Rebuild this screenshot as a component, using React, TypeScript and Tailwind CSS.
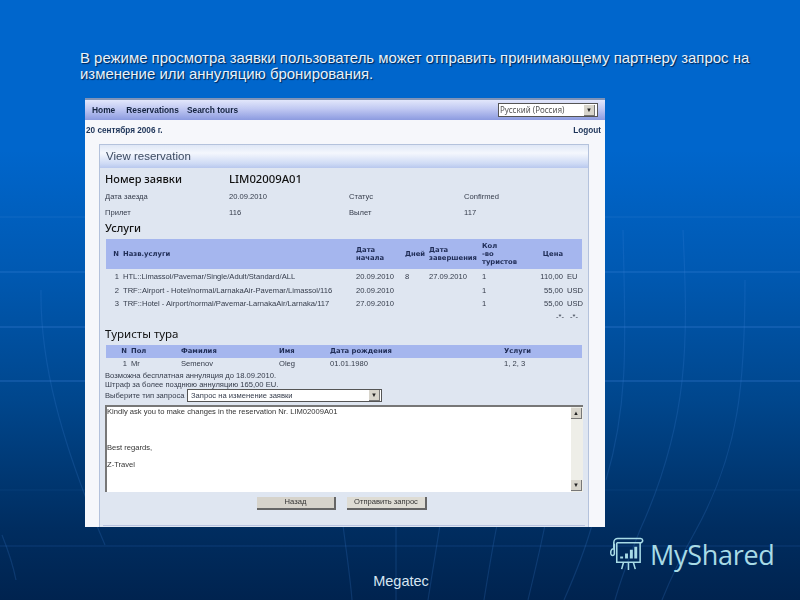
const services = [
  { n: '1', name: 'HTL::Limassol/Pavemar/Single/Adult/Standard/ALL', start: '20.09.2010', days: '8', end: '27.09.2010', count: '1', price: '110,00', cur: 'EU' },
  { n: '2', name: 'TRF::Airport - Hotel/normal/LarnakaAir-Pavemar/Limassol/116', start: '20.09.2010', days: '', end: '', count: '1', price: '55,00', cur: 'USD' },
  { n: '3', name: 'TRF::Hotel - Airport/normal/Pavemar-LarnakaAir/Larnaka/117', start: '27.09.2010', days: '', end: '', count: '1', price: '55,00', cur: 'USD' },
];

function Backdrop() {
  return (
    <svg className="absolute inset-0 w-full h-full" viewBox="0 0 800 600" fill="none">
      <g stroke="#3f86dc" strokeWidth="1">
        <path d="M0 217H800" strokeOpacity="0.25" />
        <path d="M0 272H800" strokeOpacity="0.45" />
        <path d="M0 327H800" strokeOpacity="0.5" />
        <path d="M0 381H800" strokeOpacity="0.5" />
        <path d="M0 490H800" strokeOpacity="0.1" />
        <path d="M0 546H800" strokeOpacity="0.2" />
      </g>
      <g stroke="#3f86dc" strokeWidth="1.2" strokeOpacity="0.2">
        <path d="M41 290C40 360 60 440 105 545" />
        <path d="M2 535C6 545 12 560 16 580" />
        <path d="M343 525C346 550 350 575 352 600" />
        <path d="M396 525V600" />
        <path d="M440 525C436 550 432 575 428 600" />
        <path d="M497 525C492 550 488 575 484 600" />
        <path d="M545 525C540 550 534 575 528 600" />
        <path d="M592 525C585 550 575 575 564 600" />
        <path d="M623 230C625 330 630 400 606 480" />
        <path d="M683 230C688 340 690 420 640 530" />
        <path d="M745 280C745 380 740 450 696 530" />
        <path d="M640 530C630 555 622 575 615 600" />
        <path d="M696 530C682 555 672 575 662 600" />
      </g>
    </svg>
  );
}

function ArrowBox({ dir = 'down' }: { dir?: 'down' | 'up' }) {
  return (
    <span className="w-[11px] h-[11px] flex items-center justify-center bg-[#d8d5cc] border-r border-b border-[#777] text-[#222] text-[6px] leading-none">
      {dir === 'down' ? '▼' : '▲'}
    </span>
  );
}

function LogoIcon() {
  return (
    <svg width="37" height="37" viewBox="0 0 38 38" fill="none" stroke="#a8dbe6" strokeWidth="1.6">
      <path d="M6 13V6.5C6 4 8 2.5 10 2.5H33.5C36 2.5 36.5 6 34 7H9" />
      <path d="M6 13C3 13 2.5 16 3 18.5C3.5 20.5 6 20.5 6.5 18.5V8" />
      <path d="M9 7V27H33V7" />
      <path d="M14 34L16 27M21 35V27M28 34L26 27" />
      <path d="M14 23V21M19 23V18M24 23V14M28.5 23V11" strokeWidth="3" />
    </svg>
  );
}

export default function App() {
  return (
    <div className="relative w-[800px] h-[600px] overflow-hidden bg-[linear-gradient(180deg,#0066cc_0%,#0066cc_25%,#0059b2_45%,#00468c_67%,#002d60_88%,#00234f_100%)] font-['Liberation_Sans',sans-serif]">
      <Backdrop />
      <div className="relative flex flex-col h-full">
        <p className="ml-[80px] mt-[50px] w-[690px] text-[14.95px] leading-[15.5px] text-[#e8f2fb] [text-shadow:1px_1px_1px_#00234f] h-[48px]">
          В режиме просмотра заявки пользователь может отправить принимающему партнеру запрос на изменение или аннуляцию бронирования.
        </p>

        <div className="ml-[85px] w-[520px] h-[429px] bg-[#f6f7fb] border-t-2 border-[#7f93b8] blur-[0.35px] text-[7.6px] text-[#343b4a] flex flex-col overflow-hidden">
          <div className="h-[20px] shrink-0 px-[7px] flex items-center justify-between bg-[linear-gradient(180deg,#e2e7fb_0%,#c0c8f2_45%,#8c9be0_100%)]">
            <div className="flex text-[8.4px] font-bold text-[#14233f]">
              <span>Home</span>
              <span className="ml-[11px]">Reservations</span>
              <span className="ml-[8px]">Search tours</span>
            </div>
            <div className="w-[100px] h-[14px] bg-white border border-[#555] pl-[1px] pr-[2px] flex items-center justify-between text-[8px] text-[#555] font-['Noto_Sans',sans-serif]">
              <span>Русский (Россия)</span>
              <ArrowBox />
            </div>
          </div>

          <div className="h-[24px] shrink-0 pl-[1px] pr-[4px] pt-[5px] flex justify-between text-[8.2px] font-bold text-[#1c3358]">
            <span>20 сентября 2006 г.</span>
            <span>Logout</span>
          </div>

          <div className="ml-[14px] mr-[16px] flex-1 bg-[#dfe6f1] border-x border-t border-[#b4c2dc] flex flex-col">
            <div className="h-[23px] shrink-0 pl-[6px] flex items-center text-[11.5px] text-[#3c4a60] bg-[linear-gradient(180deg,#dfe7f6_0%,#f4f7fd_35%,#cfdbf5_80%,#b8c8ee_100%)]">
              View reservation
            </div>

            <div className="pl-[5px] pr-[5px] flex flex-col">
              <div className="flex items-center h-[20px] mt-[1px] text-[#111] text-[11px] font-medium font-['Noto_Sans',sans-serif]">
                <span className="w-[124px]">Номер заявки</span>
                <span className="text-[11.3px]">LIM02009A01</span>
              </div>
              <div className="grid grid-cols-[124px_120px_115px_1fr] h-[16px] items-center">
                <span>Дата заезда</span>
                <span>20.09.2010</span>
                <span>Статус</span>
                <span>Confirmed</span>
              </div>
              <div className="grid grid-cols-[124px_120px_115px_1fr] h-[15px] items-center">
                <span>Прилет</span>
                <span>116</span>
                <span>Вылет</span>
                <span>117</span>
              </div>
              <div className="h-[17px] flex items-center text-[11px] font-medium text-[#111] font-['Noto_Sans',sans-serif]">Услуги</div>

              <div className="ml-[1px] mr-[1px] mt-[2px]">
                <div className="grid grid-cols-[15px_233px_49px_24px_53px_41px_44px_18px] gap-x-0 h-[30px] items-center bg-[#a5b6ee] text-[#1f2c55] font-bold font-['DejaVu_Sans',sans-serif] text-[6.8px] leading-[8px]">
                  <span className="text-right pr-[2px]">N</span>
                  <span className="pl-[2px]">Назв.услуги</span>
                  <span className="pl-[2px]">Дата<br />начала</span>
                  <span className="pl-[2px]">Дней</span>
                  <span className="pl-[2px]">Дата<br />завершения</span>
                  <span className="pl-[2px]">Кол<br />-во<br />туристов</span>
                  <span className="text-right pr-[2px]">Цена</span>
                  <span />
                </div>
                <div className="h-[1px]" />
                {services.map((s) => (
                  <div key={s.n} className="grid grid-cols-[15px_233px_49px_24px_53px_41px_44px_18px] h-[13px] items-center mt-[0.5px]">
                    <span className="text-right pr-[2px]">{s.n}</span>
                    <span className="pl-[2px] whitespace-nowrap">{s.name}</span>
                    <span className="pl-[2px]">{s.start}</span>
                    <span className="pl-[2px]">{s.days}</span>
                    <span className="pl-[2px]">{s.end}</span>
                    <span className="pl-[2px]">{s.count}</span>
                    <span className="text-right pr-[2px]">{s.price}</span>
                    <span className="pl-[2px]">{s.cur}</span>
                  </div>
                ))}
                <div className="flex justify-end h-[13px] items-center gap-[6px] pr-[4px]">
                  <span>-*-</span>
                  <span>-*-</span>
                </div>
              </div>

              <div className="h-[20px] flex items-center text-[11.5px] text-[#111] font-['Noto_Sans',sans-serif]">Туристы тура</div>

              <div className="ml-[1px] mr-[1px] mt-[1px]">
                <div className="grid grid-cols-[23px_51px_98px_51px_174px_1fr] h-[13px] items-center bg-[#a5b6ee] text-[#1f2c55] font-bold font-['DejaVu_Sans',sans-serif] text-[6.8px]">
                  <span className="text-right pr-[2px]">N</span>
                  <span className="pl-[2px]">Пол</span>
                  <span className="pl-[1px]">Фамилия</span>
                  <span className="pl-[1px]">Имя</span>
                  <span className="pl-[1px]">Дата рождения</span>
                  <span className="pl-[1px]">Услуги</span>
                </div>
                <div className="grid grid-cols-[23px_51px_98px_51px_174px_1fr] h-[13px] items-center">
                  <span className="text-right pr-[2px]">1</span>
                  <span className="pl-[2px]">Mr</span>
                  <span className="pl-[1px]">Semenov</span>
                  <span className="pl-[1px]">Oleg</span>
                  <span className="pl-[1px]">01.01.1980</span>
                  <span className="pl-[1px]">1, 2, 3</span>
                </div>
              </div>

              <div className="leading-[9px]">
                <div>Возможна бесплатная аннуляция до 18.09.2010.</div>
                <div>Штраф за более позднюю аннуляцию 165,00 EU.</div>
              </div>

              <div className="flex items-center h-[14px]">
                <span className="w-[82px]">Выберите тип запроса</span>
                <div className="w-[195px] h-[13px] bg-white border border-[#555] pl-[3px] pr-[1px] flex items-center justify-between">
                  <span>Запрос на изменение заявки</span>
                  <ArrowBox />
                </div>
              </div>

              <div className="mt-[2px] h-[87px] bg-white border-l-2 border-t-2 border-[#777] flex justify-between text-[#333]">
                <div className="leading-[9px]">
                  <div>Kindly ask you to make changes in the reservation Nr. LIM02009A01</div>
                  <div className="mt-[27px]">Best regards,</div>
                  <div className="mt-[8px]">Z-Travel</div>
                </div>
                <div className="w-[12px] bg-[#eeeee8] flex flex-col justify-between py-[1px]">
                  <ArrowBox dir="up" />
                  <ArrowBox />
                </div>
              </div>

              <div className="flex justify-center gap-[11px] mt-[5px] pr-[4px] text-[#333]">
                <button className="w-[79px] h-[13px] bg-[#d6d3cb] border-r-2 border-b-2 border-[#666] flex items-center justify-center">Назад</button>
                <button className="w-[80px] h-[13px] bg-[#dedcd4] border-r-2 border-b-2 border-[#666] flex items-center justify-center">Отправить запрос</button>
              </div>
              <div className="h-px bg-[#b9c3e0] mt-[15px] -mx-[2px]" />
            </div>
          </div>
        </div>

        <div className="relative flex-1 flex items-end justify-center pb-[11px] pl-[2px] text-[14.5px] leading-[16px] text-[#d6e6f2]">
          Megatec
        </div>
      </div>

      <div className="absolute left-[608px] top-[536px] flex items-center gap-[5px]">
        <LogoIcon />
        <span className="text-[27px] leading-[36px] tracking-[-0.3px] text-[#a8dbe6] font-['Open_Sans',sans-serif]">MyShared</span>
      </div>
    </div>
  );
}
